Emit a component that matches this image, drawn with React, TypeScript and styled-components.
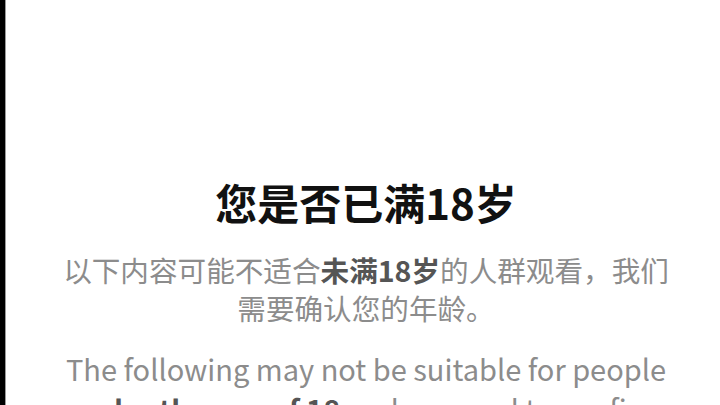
import React from 'react';
import styled, { createGlobalStyle } from 'styled-components';

const GlobalStyle = createGlobalStyle`
    html, body {
        margin: 0;
        padding: 0;
        background: #ffffff;
        overflow: hidden;
    }
    body {
        font-family: "Noto Sans CJK SC", "Noto Sans", sans-serif;
    }
`;

export default function App() {
    return (
        <>
            <GlobalStyle />
            <Screen>
                <Edge />
                <Content>
                    <Title>您是否已满18岁</Title>
                    <Notice>
                        以下内容可能不适合<Strong>未满18岁</Strong>
                        的人群观看，我们需要确认您的年龄。
                    </Notice>
                    <Notice lang="en" $latin>
                        The following may not be suitable for people{' '}
                        <Strong>under the age of 18</Strong> and we need to
                        confirm your age.
                    </Notice>
                </Content>
            </Screen>
        </>
    );
}

const Screen = styled.div`
    display: flex;
    width: 720px;
    height: 405px;
    overflow: hidden;
`;

const Edge = styled.div`
    flex: 0 0 5px;
    background: #000000;
    border-right: 1px solid #9a9a9a;
`;

const Content = styled.main`
    flex: 1;
    display: flex;
    flex-direction: column;
    align-items: center;
    padding: 174px 43px 0 49px;
    text-align: center;
`;

const Title = styled.h1`
    margin: 0 0 21px;
    font-size: 42px;
    font-weight: 700;
    line-height: 56px;
    color: #111111;
`;

const Notice = styled.p<{ $latin?: boolean }>`
    margin: 0 0 ${(p) => (p.$latin ? '0' : '21px')};
    font-size: ${(p) => (p.$latin ? '29px' : '28.6px')};
    line-height: ${(p) => (p.$latin ? '40px' : '38px')};
    color: #8c8c8c;
    font-weight: 400;
`;

const Strong = styled.b`
    font-weight: 700;
    color: #555555;
`;
